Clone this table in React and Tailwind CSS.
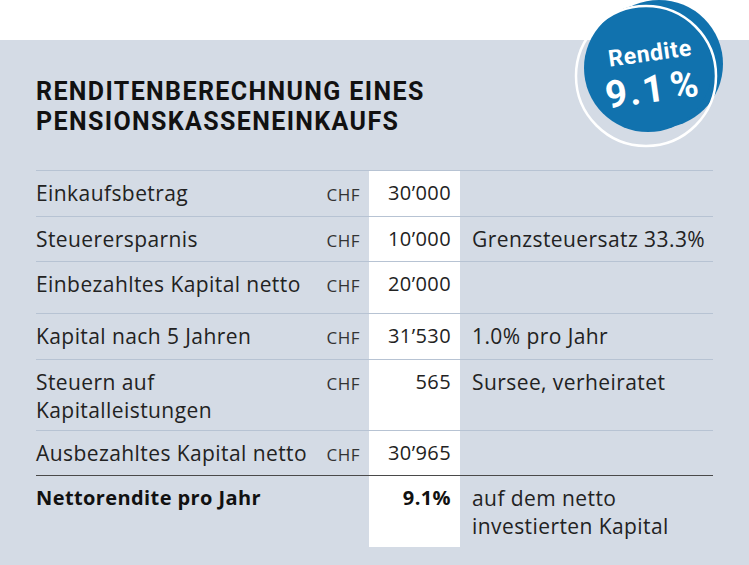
import React from "react";

const rows = [
  { label: ["Einkaufsbetrag"], value: "30’000", note: [], h: "h-[46px]" },
  { label: ["Steuerersparnis"], value: "10’000", note: ["Grenzsteuersatz 33.3%"], h: "h-[45px]" },
  { label: ["Einbezahltes Kapital netto"], value: "20’000", note: [], h: "h-[52px]" },
  { label: ["Kapital nach 5 Jahren"], value: "31’530", note: ["1.0% pro Jahr"], h: "h-[46px]" },
  { label: ["Steuern auf", "Kapitalleistungen"], value: "565", note: ["Sursee, verheiratet"], h: "h-[71px]" },
  { label: ["Ausbezahltes Kapital netto"], value: "30’965", note: [], h: "h-[45px]" },
];

function Row({ r }) {
  return (
    <div className={`grid grid-cols-[282px_51px_91px_253px] border-t border-[#b7c3d3] ${r.h}`}>
      <div className="pt-[8px] leading-[28px] text-[21px] tracking-[0.02em] text-[#222]">
        {r.label.map((l, i) => (
          <div key={i}>{l}</div>
        ))}
      </div>
      <div className="pt-[10px] leading-[28px] text-[17px] tracking-[0.03em] text-[#333] text-right pr-[9px]">CHF</div>
      <div className="bg-white pt-[8px] leading-[28px] text-[20px] tracking-[0.02em] text-[#222] text-right pr-[9px]">{r.value}</div>
      <div className="pt-[8px] pl-[12px] leading-[28px] text-[21px] tracking-[0.02em] text-[#222]">
        {r.note.map((l, i) => (
          <div key={i}>{l}</div>
        ))}
      </div>
    </div>
  );
}

export default function App() {
  return (
    <div className="relative w-[749px] h-[565px] overflow-hidden bg-white font-['Open_Sans',sans-serif]">
      <div className="h-[40px]" />
      <div className="h-[525px] bg-[#d4dbe5] px-[36px] pt-[37px]">
        <h1 className="font-['Roboto',sans-serif] text-[25px] leading-[30px] font-bold tracking-[0.055em] text-[#111]">
          RENDITENBERECHNUNG EINES
          <br />
          PENSIONSKASSENEINKAUFS
        </h1>
        <div className="mt-[33px] w-[677px]">
          {rows.map((r, i) => (
            <Row key={i} r={r} />
          ))}
          <div className="grid grid-cols-[282px_51px_91px_253px] border-t-[1.5px] border-[#4a4a4a] h-[72px]">
            <div className="pt-[8px] leading-[28px] text-[20px] font-bold tracking-[0.02em] text-[#111]">Nettorendite pro Jahr</div>
            <div />
            <div className="bg-white pt-[8px] leading-[28px] text-[20px] font-bold tracking-[0.02em] text-[#111] text-right pr-[9px]">9.1%</div>
            <div className="pt-[8px] pl-[12px] leading-[28px] text-[21px] tracking-[0.02em] text-[#222]">
              <div>auf dem netto</div>
              <div>investierten Kapital</div>
            </div>
          </div>
        </div>
      </div>

      <div className="absolute left-[560px] top-0 w-[189px] h-[165px]">
        <svg width="189" height="165" viewBox="0 0 189 165" className="absolute inset-0">
          <circle cx="99" cy="64" r="64" fill="#1172ae" />
          <circle cx="88" cy="68" r="64" fill="#1172ae" />
          <circle cx="86" cy="76" r="70" fill="none" stroke="#ffffff" strokeWidth="2.5" />
        </svg>
        <div className="absolute left-[40px] top-[45px] w-[100px] flex flex-col items-center text-white font-bold font-['Roboto',sans-serif]">
          <div className="-rotate-[8deg] text-[23px] leading-[18px] tracking-[0.03em]">Rendite</div>
          <div className="-rotate-[8deg] mt-[12px] ml-[6px] text-[38px] leading-[28px] tracking-[0.06em]">
            9.1<span className="ml-[4px]">%</span>
          </div>
        </div>
      </div>
    </div>
  );
}
